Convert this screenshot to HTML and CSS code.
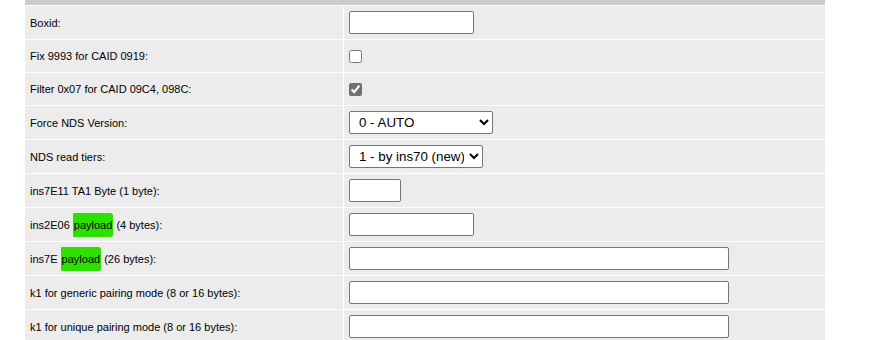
FILE: index.html
```html
<!DOCTYPE html>
<html>

<head>
    <link rel="stylesheet" href="styles.css">
</head>

<body>
    <table class="config">
        <tr>
            <th colspan="2"></th>
        </tr>
        <tr>
            <td class="label">Boxid:</td>
            <td><input type="text" class="w-md"></td>
        </tr>
        <tr class="check-row">
            <td class="label">Fix 9993 for CAID 0919:</td>
            <td><input type="checkbox"></td>
        </tr>
        <tr class="check-row">
            <td class="label">Filter 0x07 for CAID 09C4, 098C:</td>
            <td><input type="checkbox" checked></td>
        </tr>
        <tr>
            <td class="label">Force NDS Version:</td>
            <td>
                <select class="sel-version">
                    <option>0 - AUTO</option>
                    <option>1 - NDS1</option>
                    <option>2 - NDS1+</option>
                    <option>3 - NDS2</option>
                </select>
            </td>
        </tr>
        <tr>
            <td class="label">NDS read tiers:</td>
            <td>
                <select class="sel-tiers">
                    <option>0 - disabled</option>
                    <option selected>1 - by ins70 (new)</option>
                    <option>2 - by ins7E</option>
                </select>
            </td>
        </tr>
        <tr>
            <td class="label">ins7E11 TA1 Byte (1 byte):</td>
            <td><input type="text" class="w-sm"></td>
        </tr>
        <tr>
            <td class="label">ins2E06 <span class="mark">payload</span> (4 bytes):</td>
            <td><input type="text" class="w-md"></td>
        </tr>
        <tr>
            <td class="label">ins7E <span class="mark">payload</span> (26 bytes):</td>
            <td><input type="text" class="w-lg"></td>
        </tr>
        <tr>
            <td class="label">k1 for generic pairing mode (8 or 16 bytes):</td>
            <td><input type="text" class="w-lg"></td>
        </tr>
        <tr>
            <td class="label">k1 for unique pairing mode (8 or 16 bytes):</td>
            <td><input type="text" class="w-lg"></td>
        </tr>
    </table>
</body>

</html>
```

FILE: styles.css
```css
body {
    margin: 0;
    background-color: white;
    font-family: "Liberation Sans", Arial, sans-serif;
    font-size: 11px;
    color: #000000;
}

.config {
    margin: -1px 0 0 24px;
    width: 802px;
    border-collapse: separate;
    border-spacing: 1px;
}

th {
    height: 5px;
    padding: 0;
    background-color: #cccccc;
}

td {
    height: 23px;
    padding: 5px;
    background-color: #ececec;
    vertical-align: middle;
}

td.label {
    width: 308px;
}

.check-row td {
    height: 22px;
}

input[type=text] {
    display: block;
    height: 23px;
    box-sizing: border-box;
    padding: 1px 2px;
    margin: 0;
    border: 1px solid #767676;
    border-radius: 2px;
    background-color: white;
}

.w-sm {
    width: 52px;
}

.w-md {
    width: 125px;
}

.w-lg {
    width: 380px;
}

input[type=checkbox] {
    display: block;
    width: 13px;
    height: 13px;
    margin: 0;
    accent-color: #707070;
}

select {
    display: block;
    height: 23px;
    margin: 0;
    padding: 0 2px 0 5px;
    border: 1px solid #767676;
    border-radius: 2px;
    background-color: white;
    font-family: "Liberation Sans", Arial, sans-serif;
    font-size: 13.33px;
    color: #000000;
}

.sel-version {
    width: 144px;
}

.sel-tiers {
    width: 134px;
}

.mark {
    background-color: #2ee000;
    padding: 6px 1px 6px 1px;
    border-radius: 1px 3px 2px 1px;
}
```
